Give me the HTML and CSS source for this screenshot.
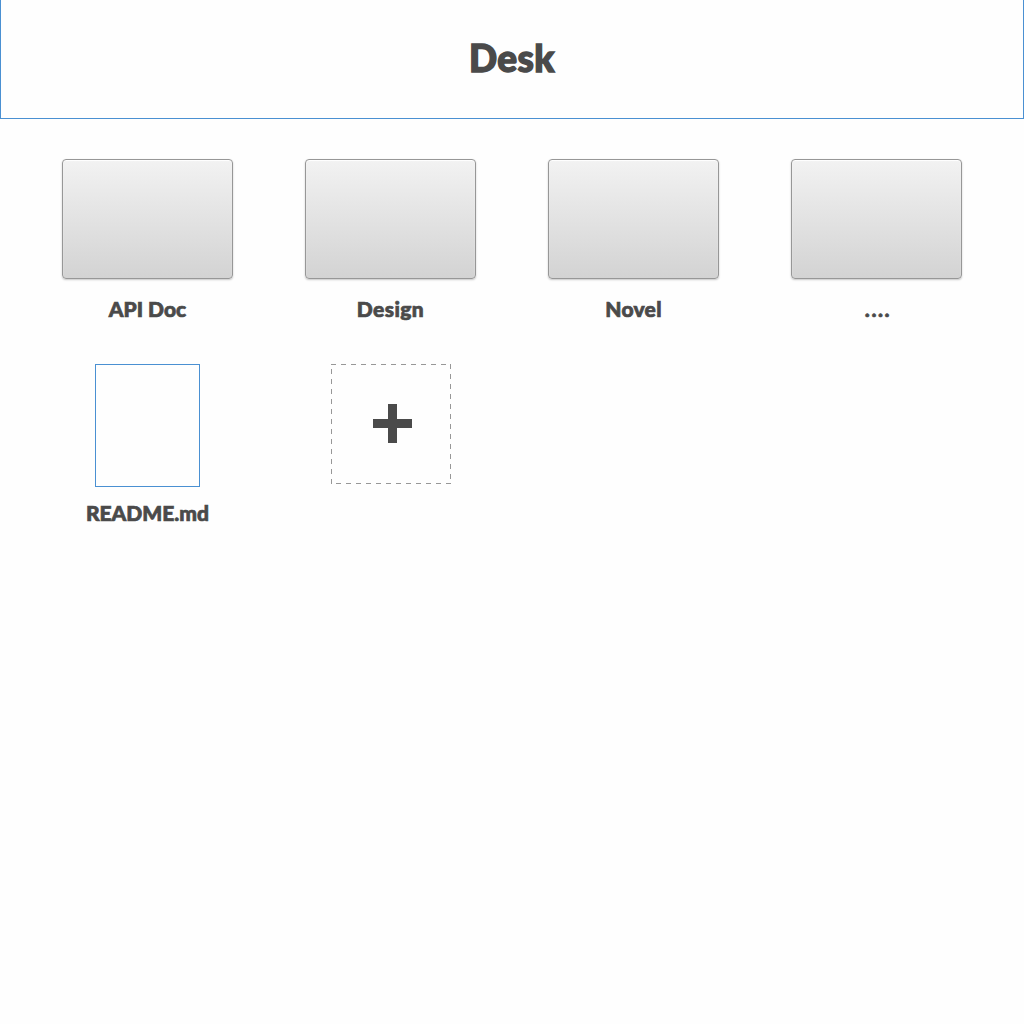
FILE: index.html
```html
<!DOCTYPE html>
<html lang="en">
<head>
<meta charset="utf-8">
<title>Desk</title>
<link rel="stylesheet" href="styles.css">
</head>
<body>
<header class="header"><h1 class="title">Desk</h1></header>
<main class="grid">
  <div class="item"><div class="folder"></div><span class="label">API Doc</span></div>
  <div class="item"><div class="folder"></div><span class="label design">Design</span></div>
  <div class="item"><div class="folder"></div><span class="label novel">Novel</span></div>
  <div class="item"><div class="folder"></div><span class="label dots">....</span></div>
  <div class="item"><div class="file"></div><span class="label readme">README.md</span></div>
  <div class="item"><svg class="add" width="120" height="120" viewBox="0 0 120 120"><path d="M0 .5H120M119.5 0V120M120 119.5H0M.5 120V0" fill="none" stroke="#979797" stroke-dasharray="5"/><path d="M57 40h9v15h15v9H66v15h-9V64H42v-9h15z" fill="#4a4a4a"/></svg></div>
</main>
</body>
</html>
```

FILE: styles.css
```css
* { box-sizing: border-box; }
body { margin: 0; background: #fefefe; color: #4a4a4a; font-family: Lato, sans-serif; }
.header { height: 119px; border: 1px solid #4a90d2; border-top: 0; background: #fefefe; display: flex; justify-content: center; }
.title { margin: 0; font-size: 37px; line-height: 115px; font-weight: 900; letter-spacing: .4px; -webkit-text-stroke: 1.4px #4a4a4a; }
.grid { display: grid; grid-template-columns: repeat(4, 171px); column-gap: 72px; grid-template-rows: 205px 170px; padding: 40px 62px; }
.item { display: flex; flex-direction: column; align-items: center; }
.folder { width: 171px; height: 120px; border: 1px solid #979797; border-radius: 4px; background: linear-gradient(#f2f2f2, #d3d3d3); box-shadow: 0 1px 2px rgba(0,0,0,.22), inset 0 1px 1px #fff; }
.file { width: 105px; height: 123px; border: 1px solid #4a90d2; background: #fefefe; }
.label { font-size: 21px; line-height: 26px; font-weight: 900; white-space: nowrap; margin-top: 17px; -webkit-text-stroke: .7px #4a4a4a; }
.design { letter-spacing: .4px; }
.novel { letter-spacing: .3px; }
.dots { letter-spacing: 1.6px; padding-left: 3px; }
.file + .label { margin-top: 13px; }
```
